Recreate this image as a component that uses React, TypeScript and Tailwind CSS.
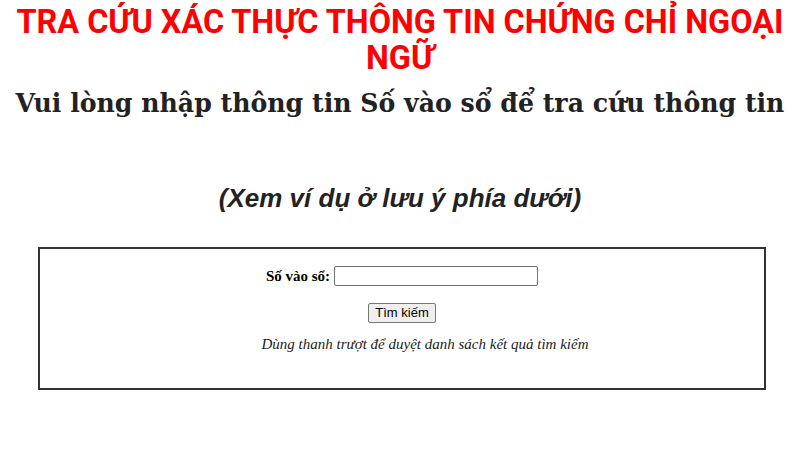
import React from 'react';

const App: React.FC = () => {
  return (
    <div className="w-[800px] h-[451px] bg-white overflow-hidden text-center">
      <h1
        className="pt-[4px] px-[14px] text-[32.4px] leading-[36px] font-bold text-[#ff0000]"
        style={{ fontFamily: 'Roboto, "Liberation Sans", sans-serif' }}
      >
        TRA CỨU XÁC THỰC THÔNG TIN CHỨNG CHỈ NGOẠI NGỮ
      </h1>
      <h2
        className="mt-[9px] text-[25.2px] leading-[36px] font-bold text-[#222] whitespace-nowrap"
        style={{ fontFamily: '"DejaVu Serif", "Liberation Serif", serif' }}
      >
        Vui lòng nhập thông tin Số vào sổ để tra cứu thông tin
      </h2>
      <h3
        className="mt-[60px] text-[26px] leading-[34px] font-bold italic text-[#222]"
        style={{ fontFamily: '"Liberation Sans", Arial, sans-serif' }}
      >
        (Xem ví dụ ở lưu ý phía dưới)
      </h3>
      <div
        className="mx-[38px] mt-[32px] w-[728px] h-[143px] border-2 border-[#333] flex flex-col items-center pt-[16px]"
        style={{ fontFamily: '"Liberation Serif", "Times New Roman", serif' }}
      >
        <div className="flex items-center gap-[4px] text-[15px]">
          <label className="font-bold text-black">Số vào sổ:</label>
          <input
            type="text"
            className="w-[204px] h-[20px] border border-[#767676] rounded-[2px] bg-white"
          />
        </div>
        <button
          className="mt-[15px] h-[20px] px-[6px] border border-[#767676] rounded-[2px] bg-[#efefef] text-[13px] text-black leading-[18px]"
          style={{ fontFamily: '"Liberation Sans", Arial, sans-serif' }}
        >
          Tìm kiếm
        </button>
        <p className="mt-[10px] pl-[46px] italic text-[15px] text-[#222]">
          Dùng thanh trượt để duyệt danh sách kết quả tìm kiếm
        </p>
      </div>
    </div>
  );
};

export default App;
